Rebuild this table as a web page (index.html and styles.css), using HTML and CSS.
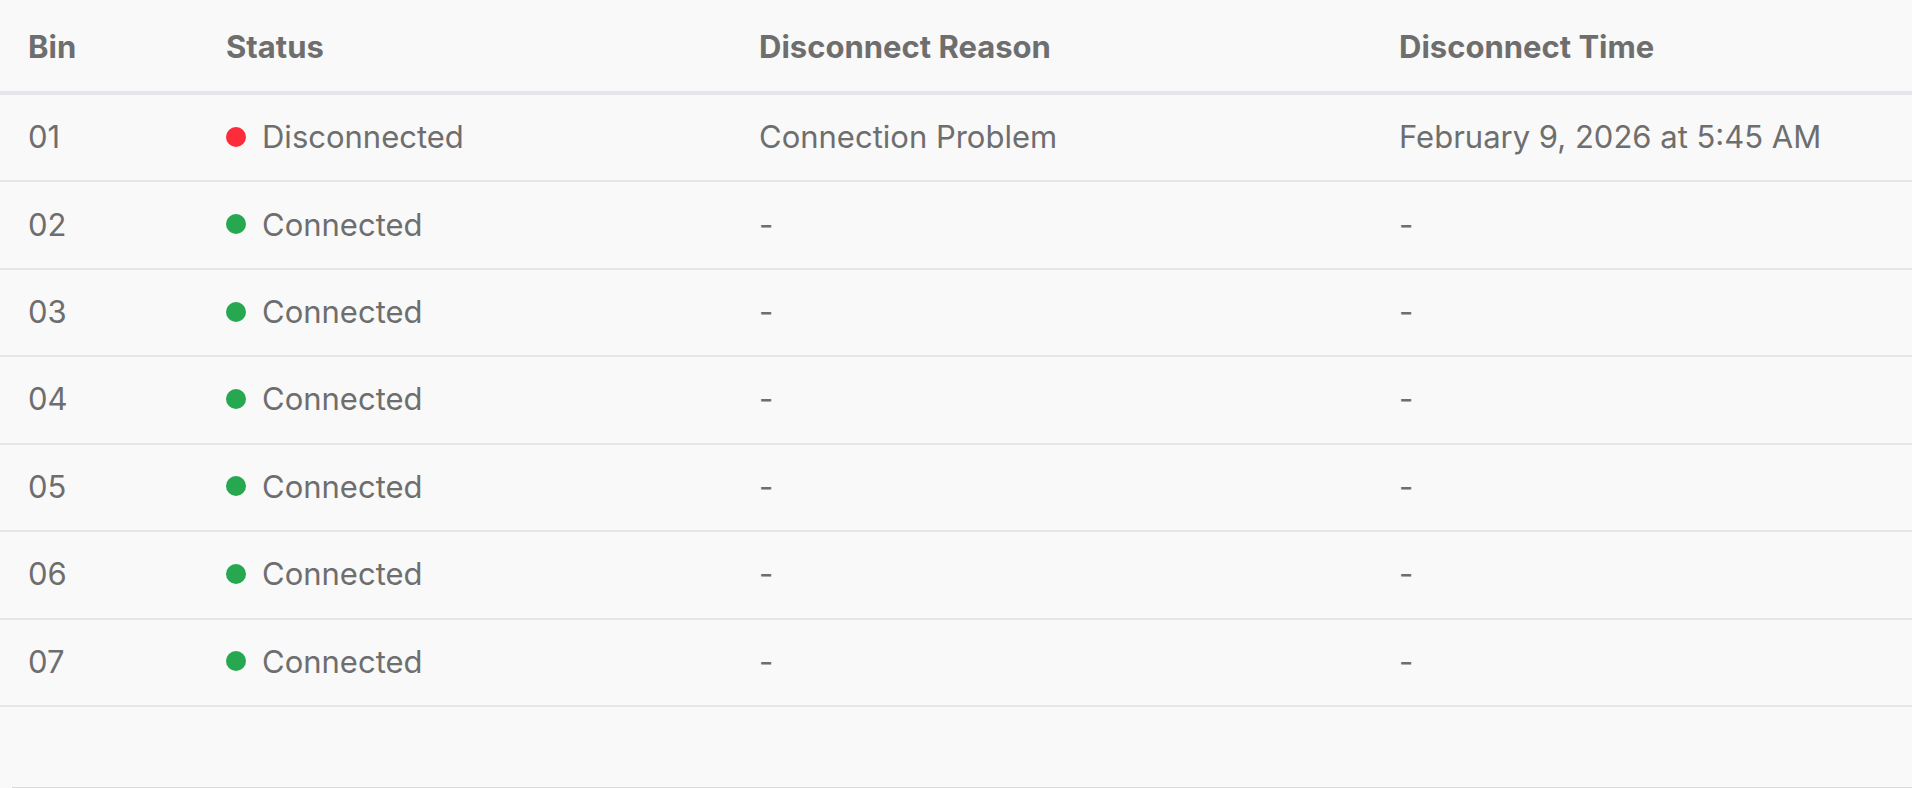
FILE: index.html
```html
<!DOCTYPE html>
<html>
<head>
<meta charset="utf-8">
<link rel="stylesheet" href="styles.css">
</head>
<body>
<div class="page">
  <div class="table">
    <div class="row head">
      <div class="cell">Bin</div>
      <div class="cell">Status</div>
      <div class="cell">Disconnect Reason</div>
      <div class="cell">Disconnect Time</div>
    </div>
    <div class="row">
      <div class="cell">01</div>
      <div class="cell status"><span class="dot red"></span>Disconnected</div>
      <div class="cell">Connection Problem</div>
      <div class="cell">February 9, 2026 at 5:45 AM</div>
    </div>
    <div class="row">
      <div class="cell">02</div>
      <div class="cell status"><span class="dot green"></span>Connected</div>
      <div class="cell">-</div>
      <div class="cell">-</div>
    </div>
    <div class="row">
      <div class="cell">03</div>
      <div class="cell status"><span class="dot green"></span>Connected</div>
      <div class="cell">-</div>
      <div class="cell">-</div>
    </div>
    <div class="row">
      <div class="cell">04</div>
      <div class="cell status"><span class="dot green"></span>Connected</div>
      <div class="cell">-</div>
      <div class="cell">-</div>
    </div>
    <div class="row">
      <div class="cell">05</div>
      <div class="cell status"><span class="dot green"></span>Connected</div>
      <div class="cell">-</div>
      <div class="cell">-</div>
    </div>
    <div class="row">
      <div class="cell">06</div>
      <div class="cell status"><span class="dot green"></span>Connected</div>
      <div class="cell">-</div>
      <div class="cell">-</div>
    </div>
    <div class="row">
      <div class="cell">07</div>
      <div class="cell status"><span class="dot green"></span>Connected</div>
      <div class="cell">-</div>
      <div class="cell">-</div>
    </div>
  </div>
  <div class="spacer"></div>
  <div class="footer-line"></div>
</div>
</body>
</html>
```
FILE: styles.css
```css
html, body {
  margin: 0;
  padding: 0;
  background: #f9f9f9;
}
body {
  font-family: Inter, "Noto Sans", sans-serif;
  color: #6e6e6e;
  height: 788px;
  overflow: hidden;
}
.page {
  display: flex;
  flex-direction: column;
  height: 788px;
}
.table {
  display: flex;
  flex-direction: column;
}
.row {
  display: grid;
  grid-template-columns: 198px 533px 640px 1fr;
  align-items: center;
  height: 85.43px;
  border-bottom: 2px solid #e6e6ea;
  font-size: 31px;
  font-weight: 400;
}
.row.head {
  height: 91px;
  border-bottom: 4px solid #e6e6ea;
  font-weight: 700;
}
.cell {
  padding-left: 28px;
  padding-bottom: 2px;
  white-space: nowrap;
  line-height: 1.2;
}
.head .cell {
  padding-top: 2px;
  padding-bottom: 0;
}
.status {
  display: flex;
  align-items: center;
  gap: 16px;
}
.dot {
  width: 20px;
  height: 20px;
  border-radius: 50%;
  flex: none;
}
.dot.red { background: #fd2c3a; }
.dot.green { background: #27a850; }
.spacer { flex: 1; }
.footer-line {
  height: 1px;
  margin-left: 12px;
  background: #dadada;
}
```
